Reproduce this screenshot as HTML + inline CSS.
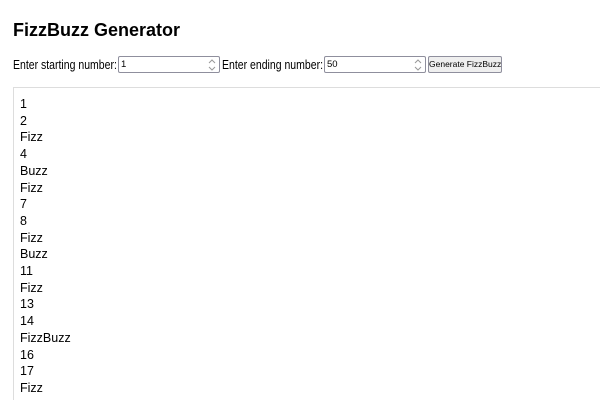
<!DOCTYPE html>
<html style="height:400px;overflow:hidden"><head><style>
body{margin:0;width:600px;height:400px;overflow:hidden;position:relative;background:#fff;font-family:"Liberation Sans",Arial,sans-serif;color:#000}
h1{position:absolute;left:13px;top:20px;margin:0;font-size:18px;font-weight:bold}
.row{position:absolute;top:56px;left:13px;font-size:12.5px;white-space:nowrap}
.lbl{position:absolute;top:2px;transform-origin:0 0;transform:scaleX(0.84)}
.inp{position:absolute;top:0;height:15px;width:98px;border:1px solid #8f8f9d;border-radius:2px;font-size:9.5px;line-height:15px;padding-left:2px;box-sizing:content-box}
.spin{position:absolute;right:3px;top:2px}
.btn{position:absolute;top:0;height:15px;width:72px;border:1px solid #8f8f9d;border-radius:2px;background:#efefef;font-size:8.5px;line-height:15px;text-align:center;overflow:hidden}
.out{position:absolute;left:13px;top:87px;width:600px;height:300px;border:1px solid #ddd;font-size:12.5px;line-height:16.7px;padding:8px 6px;overflow:hidden}
</style></head><body>
<h1>FizzBuzz Generator</h1>
<div class="row">
<span class="lbl" style="left:0">Enter starting number:</span>
<div class="inp" style="left:105px">1<svg class="spin" width="8" height="12" viewBox="0 0 8 12"><path d="M1 4L4 1L7 4M1 8L4 11L7 8" fill="none" stroke="#999" stroke-width="1"/></svg></div>
<span class="lbl" style="left:209px">Enter ending number:</span>
<div class="inp" style="left:311px">50<svg class="spin" width="8" height="12" viewBox="0 0 8 12"><path d="M1 4L4 1L7 4M1 8L4 11L7 8" fill="none" stroke="#999" stroke-width="1"/></svg></div>
<div class="btn" style="left:415px">Generate FizzBuzz</div>
</div>
<div class="out">1<br>2<br>Fizz<br>4<br>Buzz<br>Fizz<br>7<br>8<br>Fizz<br>Buzz<br>11<br>Fizz<br>13<br>14<br>FizzBuzz<br>16<br>17<br>Fizz<br>19<br>Buzz</div>
</body></html>
